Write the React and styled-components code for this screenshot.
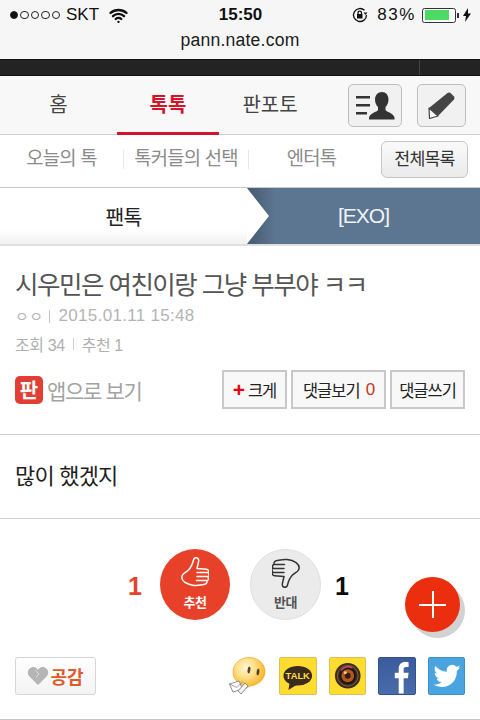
import React from 'react'
import styled, { createGlobalStyle } from 'styled-components'
import { Wifi } from 'lucide-react'

const KR = `"Liberation Sans", "Noto Sans CJK KR", sans-serif`

const GlobalStyle = createGlobalStyle`
  html, body {
    margin: 0;
    padding: 0;
    background: #fff;
    font-family: ${KR};
  }
  * { box-sizing: border-box; }
`

const Page = styled.div`
  position: relative;
  width: 480px;
  height: 720px;
  overflow: hidden;
  background: #fff;
`

const Chrome = styled.header`
  height: 59px;
  background: #f6f6f6;
  color: #111;
`

const StatusBar = styled.div`
  display: grid;
  grid-template-columns: 1fr auto 1fr;
  align-items: center;
  height: 30px;
  padding: 0 9px 0 10px;
  font-size: 17px;
`

const StatusLeft = styled.div`
  display: flex;
  align-items: center;
  gap: 2px;
`

const Dot = styled.span`
  width: 8.4px;
  height: 8.4px;
  border-radius: 50%;
  border: 1px solid #222;
  background: ${(p) => (p.$on ? '#111' : 'transparent')};
`

const Carrier = styled.span`
  margin: 0 8px 0 4px;
`

const Clock = styled.span`
  font-weight: 700;
`

const StatusRight = styled.div`
  display: flex;
  align-items: center;
  justify-content: flex-end;
`

const Percent = styled.span`
  margin: 0 6px 0 8px;
  letter-spacing: 1.6px;
`

const Battery = styled.span`
  position: relative;
  display: block;
  width: 34px;
  height: 15px;
  margin-right: 7px;
  padding: 1.5px;
  border: 1px solid #333;
  border-radius: 2.5px;
  background: #fff;

  &::before {
    content: '';
    display: block;
    width: 24px;
    height: 100%;
    background: #4cd964;
  }

  &::after {
    content: '';
    position: absolute;
    right: -4px;
    top: 4px;
    width: 2px;
    height: 5px;
    background: #333;
  }
`

const Url = styled.div`
  text-align: center;
  font-size: 17.6px;
  line-height: 20px;
  letter-spacing: 0.2px;
  color: #1c1c1c;
`

const BlackBar = styled.div`
  height: 17px;
  background: linear-gradient(90deg, #232323 419px, #444 419px, #444 420px, #232323 420px);
  border-top: 1px solid #111;
  border-bottom: 1px solid #111;
`

const Nav = styled.nav`
  display: flex;
  align-items: stretch;
  height: 59px;
  padding-right: 14px;
  background: #f8f8f8;
  border-bottom: 1px solid #cfcfcf;
`

const NavTab = styled.div`
  width: ${(p) => p.$w}px;
  display: flex;
  align-items: center;
  justify-content: center;
  margin-bottom: -1px;
  padding-bottom: 1px;
  font-size: 20px;
  font-weight: ${(p) => (p.$active ? 700 : 400)};
  color: ${(p) => (p.$active ? '#d2152b' : '#444')};
  border-bottom: 3px solid ${(p) => (p.$active ? '#d2152b' : 'transparent')};
`

const NavActions = styled.div`
  display: flex;
  gap: 15px;
  align-items: flex-start;
  margin-left: auto;
  padding-top: 8px;
`

const IconButton = styled.button`
  display: flex;
  align-items: center;
  justify-content: center;
  width: ${(p) => p.$w}px;
  height: 43px;
  padding: 0;
  background: #f1f1f1;
  border: 1px solid #bdbdbd;
  border-radius: 5px;
`

const SubNav = styled.div`
  display: flex;
  align-items: center;
  height: 53px;
  padding: 0 12px 4px 0;
  background: #fff;
  border-bottom: 1px solid #c9c9c9;
`

const SubTab = styled.div`
  width: ${(p) => p.$w}px;
  padding-bottom: 1px;
  text-align: center;
  font-size: 18.8px;
  line-height: 18px;
  letter-spacing: -0.8px;
  color: #8b8b8b;
  border-right: ${(p) => (p.$sep ? '1px solid #e6e6e6' : '0')};
`

const AllButton = styled.button`
  width: 87px;
  height: 37px;
  margin-left: auto;
  padding: 0 0 3px;
  font-family: inherit;
  font-size: 17.3px;
  letter-spacing: -0.8px;
  color: #333;
  background: linear-gradient(#fafafa, #eaeaea);
  border: 1px solid #c6c6c6;
  border-radius: 6px;
`

const Crumbs = styled.div`
  display: grid;
  grid-template-columns: 247px 1fr;
  height: 58px;
  border-bottom: 2px solid #e0e0e0;
`

const CrumbHome = styled.div`
  display: flex;
  align-items: center;
  justify-content: center;
  font-size: 20.5px;
  letter-spacing: -0.8px;
  color: #222;
  background: linear-gradient(#fff 75%, #f1f1f1);
`

const CrumbCurrent = styled.div`
  position: relative;
  display: flex;
  align-items: center;
  justify-content: center;
  font-size: 21px;
  letter-spacing: -1px;
  color: #f1f4f7;
  background: linear-gradient(90deg, #45596f, #5c7590 28px);

  &::before {
    content: '';
    position: absolute;
    left: 0;
    top: 0;
    bottom: 0;
    width: 22px;
    background: #fff;
    clip-path: polygon(0 0, 100% 50%, 0 100%);
  }
`

const Article = styled.section`
  padding: 0 15px;
  height: 189px;
  border-bottom: 1px solid #cfcfcf;
`

const Title = styled.h1`
  margin: 0;
  padding-top: 21px;
  font-size: 25.5px;
  line-height: 37px;
  font-weight: 400;
  letter-spacing: -1.5px;
  color: #555;
`

const Meta = styled.div`
  display: flex;
  align-items: center;
  height: 26px;
  margin-top: -1px;
  font-size: 17px;
  letter-spacing: 0.3px;
  color: #b4b4b4;
`

const MetaAuthor = styled.span`
  margin-right: 9px;
  padding-right: 5px;
  font-size: 15px;
  line-height: 13px;
  letter-spacing: 0.5px;
  border-right: 1px solid #c4c4c4;
`

const Stats = styled.div`
  display: flex;
  align-items: center;
  height: 28px;
  margin-top: 1px;
  font-size: 16px;
  letter-spacing: -0.4px;
  color: #b0b0b0;
`

const StatSep = styled.span`
  width: 1px;
  height: 12px;
  margin: 0 8px;
  background: #d0d0d0;
`

const ActionRow = styled.div`
  display: flex;
  align-items: center;
  justify-content: space-between;
  margin-top: 12px;
`

const AppLink = styled.div`
  display: flex;
  align-items: center;
  gap: 4px;
  font-size: 21px;
  letter-spacing: -1.3px;
  color: #a3a3a3;
`

const AppBadge = styled.span`
  display: flex;
  align-items: center;
  justify-content: center;
  width: 28px;
  height: 28px;
  border-radius: 5px;
  font-size: 20px;
  font-weight: 700;
  letter-spacing: 0;
  color: #fff;
  background: #e23f34;
`

const ActionButtons = styled.div`
  display: flex;
  gap: 4px;
`

const ActionButton = styled.button`
  display: flex;
  align-items: center;
  justify-content: center;
  gap: 4px;
  width: ${(p) => p.$w}px;
  height: 39px;
  padding: 0;
  font-family: inherit;
  font-size: 16.5px;
  letter-spacing: -1px;
  color: #222;
  background: #f8f8f8;
  border: 2px solid #c8c8c8;
`

const Plus = styled.span`
  font-size: 21px;
  line-height: 1;
  font-weight: 700;
  color: #e60012;
`

const Zero = styled.span`
  margin-left: 2px;
  font-size: 17px;
  color: #c8341c;
`

const Body = styled.p`
  display: flex;
  align-items: center;
  height: 84px;
  margin: 0;
  padding: 0 15px 5px;
  font-size: 22px;
  letter-spacing: -0.8px;
  color: #1e1e1e;
  border-bottom: 1px solid #cfcfcf;
`

const Votes = styled.div`
  display: flex;
  align-items: center;
  justify-content: center;
  height: 138px;
  padding: 0 3px 8px 0;
`

const VoteCount = styled.span`
  width: 30px;
  margin-top: 4px;
  font-size: 25px;
  font-weight: 700;
  text-align: center;
  color: ${(p) => (p.$up ? '#e2452d' : '#0c0c0c')};
`

const VoteCircle = styled.div`
  display: flex;
  flex-direction: column;
  align-items: center;
  gap: 7px;
  width: ${(p) => (p.$up ? '70px' : '71px')};
  height: 71px;
  margin: 0 ${(p) => (p.$up ? '10px' : '6px')} 0 10px;
  padding-top: ${(p) => (p.$up ? '8px' : '7px')};
  border-radius: 50%;
  font-size: 13px;
  line-height: 15px;
  font-weight: 700;
  letter-spacing: -0.5px;
  color: ${(p) => (p.$up ? '#fff' : '#555')};
  background: ${(p) => (p.$up ? '#e8412a' : '#ebebeb')};
  border: ${(p) => (p.$up ? '0' : '1px solid #e0e0e0')};
`

const Fab = styled.div`
  position: absolute;
  left: 405px;
  top: 577px;
  width: 55px;
  height: 55px;
  border-radius: 50%;
  background: #ea2e0e;
  box-shadow: 5px 6px 0 #d2d2d2;

  &::before,
  &::after {
    content: '';
    position: absolute;
    background: #fff;
  }

  &::before {
    left: 14px;
    top: 26.5px;
    width: 27px;
    height: 2px;
  }

  &::after {
    left: 26.5px;
    top: 14px;
    width: 2px;
    height: 27px;
  }
`

const ShareRow = styled.div`
  display: flex;
  align-items: flex-start;
  height: 63px;
  padding: 0 15px;
  border-bottom: 1px solid #c4c4c4;
`

const LikeButton = styled.button`
  display: flex;
  align-items: center;
  justify-content: center;
  gap: 1px;
  width: 81px;
  height: 38px;
  padding: 0;
  font-family: inherit;
  font-size: 18px;
  font-weight: 700;
  color: #dc5b2d;
  background: linear-gradient(#fff, #f3f3f3);
  border: 1px solid #d6d6d6;
  border-radius: 3px;
`

const ShareIcons = styled.div`
  display: flex;
  align-items: flex-start;
  gap: 12px;
  margin-left: auto;
`

const ShareTile = styled.div`
  display: flex;
  width: 37.5px;
  height: 37.5px;
  border-radius: 2px;
  overflow: hidden;
  border: 1px solid ${(p) => p.$edge};
  background: ${(p) => p.$bg};
`

const TileSvg = styled.svg`
  display: block;
  width: 100%;
  height: 100%;
`

const EmojiSvg = styled.svg`
  display: block;
  width: 38px;
  height: 38px;
`

const ListPersonIcon = () => (
  <svg width="40" height="30" viewBox="0 0 40 30">
    <g fill="#333">
      <rect x="1" y="5" width="14" height="2.5" />
      <rect x="1" y="13" width="14" height="2.5" />
      <rect x="1" y="21" width="11" height="2.5" />
      <path d="M27 1c4 0 6.500 3 6.500 7.500 0 3.500-1.500 6-3 7.500v3c1 2 8 3 9 7.500v2H14v-2c1-4.500 8-5.500 9-7.500v-3c-1.500-1.500-3-4-3-7.500C20 4 23 1 27 1z" />
    </g>
  </svg>
)

const PencilIcon = () => (
  <svg width="27" height="27" viewBox="0 0 27 27">
    <path d="M19.500 1Q21.500 0 23 1.500L26 4.500Q27 6 26 7.500L10 24 1 16z" fill="#444" />
    <path d="M1 16 10 24 1.500 26.500z" fill="#f6f6f6" stroke="#444" strokeWidth="1.200" strokeLinejoin="round" />
  </svg>
)

// same outline for both votes, the down one is just turned over
const ThumbPaths = () => (
  <>
    <path d="M15 .7c2 0 3 1.500 2.600 3.800L16 11.500l9.500.8c2 .2 2.800 2.200 1.800 3.700 1 1.300.9 3-.2 4 .8 1.500.3 3.200-1.200 3.800.4 2-.8 3.500-3 3.800-4 .6-7 1.200-10 .8-3.500-.4-6-1-9-3C.8 23 .2 20.500 1.500 18c1-2 4-3 6-5 2.500-2.500 4-6 5-10 .3-1.300 1.200-2.300 2.500-2.300z" />
    <path d="M16 15.500h11M16 19.500h11M15.500 23.500h10" />
  </>
)

const ThumbUp = () => (
  <svg width="28" height="31" viewBox="0 0 28 31" fill="none" stroke="#fff" strokeWidth="1.500" strokeLinejoin="round" strokeLinecap="round">
    <ThumbPaths />
  </svg>
)

const ThumbDown = () => (
  <svg width="28" height="31" viewBox="0 0 28 31" fill="none" stroke="#333" strokeWidth="1.500" strokeLinejoin="round" strokeLinecap="round">
    <g transform="rotate(180 14 15.5)">
      <ThumbPaths />
    </g>
  </svg>
)

const HeartIcon = () => (
  <svg width="22" height="20" viewBox="0 0 22 20">
    <path d="M11 19 2 10C-1 6 2 1 6.500 1 8.500 1 10 2 11 4c1-2 2.500-3 4.500-3C20 1 23 6 20 10z" fill="#b5b5b5" />
    <path d="M8 4 12 8 9 11" fill="none" stroke="#dcdcdc" strokeWidth="1" />
  </svg>
)

const BoltIcon = () => (
  <svg width="8" height="14" viewBox="0 0 8 14">
    <path d="M5 0 0 8h3l-1 6 6-8.500H5z" fill="#111" />
  </svg>
)

const RotationLockIcon = () => (
  <svg width="18" height="18" viewBox="0 0 18 18" fill="none" stroke="#111" strokeWidth="1.300">
    <path d="M15.500 9a6.500 6.500 0 1 1-2-4.700" />
    <path d="M12.500 6.500h4l-2 2.500z" fill="#111" stroke="none" />
    <rect x="6" y="8" width="5.500" height="4.500" fill="#111" stroke="none" />
    <path d="M7 8V6.800a1.700 1.700 0 0 1 3.500 0V8" />
  </svg>
)

const EmojiIcon = () => (
  <EmojiSvg viewBox="0 0 38 38">
    <defs>
      <radialGradient id="face" cx="0.4" cy="0.32" r="0.72">
        <stop offset="0" stopColor="#fff6d6" />
        <stop offset="0.4" stopColor="#ffe08a" />
        <stop offset="0.8" stopColor="#f8ba32" />
        <stop offset="1" stopColor="#e89a10" />
      </radialGradient>
    </defs>
    <path d="M20 0.500c9 0 16 6 16 14 0 8.500-8 14-15 14.500l-7 4c.5-2 .3-3.500-1-5C7 25 4 20 4 15 4 7 11 .5 20 .5z" fill="url(#face)" stroke="#eca822" strokeWidth="0.700" />
    <ellipse cx="20" cy="13" rx="1.400" ry="3.400" fill="#5a4526" transform="rotate(8 20 13)" />
    <ellipse cx="29" cy="15" rx="1.400" ry="3.400" fill="#5a4526" transform="rotate(8 29 15)" />
    <path d="M0.500 27 10 24l3.500 8-9.500 3z" fill="#fff" stroke="#8c8c8c" strokeWidth="1" />
    <path d="M0.500 27 8 30.500l5.500-6" fill="none" stroke="#8c8c8c" strokeWidth="0.800" />
    <path d="M9 34l7-8 3 3-7 8z" fill="#f4f4f4" stroke="#8c8c8c" strokeWidth="1" />
  </EmojiSvg>
)

const TalkIcon = () => (
  <TileSvg viewBox="0 0 36 36">
    <ellipse cx="18" cy="18" rx="14.500" ry="10" fill="#3a2a20" />
    <path d="M10 24l-1.500 8.500L17 27z" fill="#3a2a20" />
    <text x="18" y="21.500" textAnchor="middle" fontSize="9.500" fontWeight="700" fill="#ffdf3a" fontFamily="Liberation Sans">TALK</text>
  </TileSvg>
)

const LensIcon = () => (
  <TileSvg viewBox="0 0 36 36">
    <circle cx="18" cy="18" r="13" fill="#3c2a20" />
    <circle cx="18" cy="18" r="10.500" fill="none" stroke="#7c6238" strokeWidth="1" />
    <circle cx="18" cy="18" r="8.500" fill="#1c1512" />
    <circle cx="18" cy="18" r="6.500" fill="#b0581f" />
    <circle cx="18" cy="18" r="3" fill="#3a1a10" />
    <circle cx="15.500" cy="15" r="1.500" fill="#ffcf8a" />
    <path d="M11.500 12.500a8.500 8.500 0 0 1 11-2.500" fill="none" stroke="#d4477c" strokeWidth="1.500" />
  </TileSvg>
)

const FacebookIcon = () => (
  <TileSvg viewBox="0 0 36 36">
    <path d="M20 36V20.500h-4V15h4v-4c0-4.500 2.500-7 6.500-7 1.500 0 3 .1 3.500.2v5h-2.500c-2 0-2.500 1-2.500 2.500V15h5l-.7 5.500h-4.300V36z" fill="#fff" />
  </TileSvg>
)

const TwitterIcon = () => (
  <TileSvg viewBox="0 0 36 36">
    <path d="M32 9.500c-1 .5-2 .8-3.200 1 1.200-.7 2-1.800 2.500-3-1.100.6-2.300 1.100-3.600 1.400a5.600 5.600 0 0 0-9.600 5.100C13.400 13.800 9.300 11.600 6.500 8.200c-1.500 2.600-.7 5.900 1.700 7.500-.9 0-1.800-.3-2.500-.7 0 2.700 1.900 5 4.500 5.600-.8.200-1.700.2-2.500.1.700 2.200 2.800 3.800 5.200 3.900-2.400 1.900-5.400 2.700-8.400 2.300 9.500 6 23.800 1 23.800-13.800 1.100-.8 2-1.800 2.700-2.900z" fill="#fff" />
  </TileSvg>
)

export default function App() {
  return (
    <Page>
      <GlobalStyle />
      <Chrome>
        <StatusBar>
          <StatusLeft>
            <Dot $on />
            <Dot />
            <Dot />
            <Dot />
            <Dot />
            <Carrier>SKT</Carrier>
            <Wifi size={19} strokeWidth={3} color="#111" />
          </StatusLeft>
          <Clock>15:50</Clock>
          <StatusRight>
            <RotationLockIcon />
            <Percent>83%</Percent>
            <Battery />
            <BoltIcon />
          </StatusRight>
        </StatusBar>
        <Url>pann.nate.com</Url>
      </Chrome>
      <BlackBar />
      <Nav>
        <NavTab $w={117}>홈</NavTab>
        <NavTab $w={102} $active>톡톡</NavTab>
        <NavTab $w={102}>판포토</NavTab>
        <NavActions>
          <IconButton $w={54}><ListPersonIcon /></IconButton>
          <IconButton $w={49}><PencilIcon /></IconButton>
        </NavActions>
      </Nav>
      <SubNav>
        <SubTab $w={124} $sep>오늘의 톡</SubTab>
        <SubTab $w={125} $sep>톡커들의 선택</SubTab>
        <SubTab $w={125}>엔터톡</SubTab>
        <AllButton>전체목록</AllButton>
      </SubNav>
      <Crumbs>
        <CrumbHome>팬톡</CrumbHome>
        <CrumbCurrent>[EXO]</CrumbCurrent>
      </Crumbs>
      <Article>
        <Title>시우민은 여친이랑 그냥 부부야 ㅋㅋ</Title>
        <Meta>
          <MetaAuthor>ㅇㅇ</MetaAuthor>
          2015.01.11 15:48
        </Meta>
        <Stats>
          조회 34
          <StatSep />
          추천 1
        </Stats>
        <ActionRow>
          <AppLink>
            <AppBadge>판</AppBadge>
            앱으로 보기
          </AppLink>
          <ActionButtons>
            <ActionButton $w={65}><Plus>+</Plus>크게</ActionButton>
            <ActionButton $w={95}>댓글보기<Zero>0</Zero></ActionButton>
            <ActionButton $w={75}>댓글쓰기</ActionButton>
          </ActionButtons>
        </ActionRow>
      </Article>
      <Body>많이 했겠지</Body>
      <Votes>
        <VoteCount $up>1</VoteCount>
        <VoteCircle $up>
          <ThumbUp />
          추천
        </VoteCircle>
        <VoteCircle>
          <ThumbDown />
          반대
        </VoteCircle>
        <VoteCount>1</VoteCount>
      </Votes>
      <Fab />
      <ShareRow>
        <LikeButton>
          <HeartIcon />
          공감
        </LikeButton>
        <ShareIcons>
          <EmojiIcon />
          <ShareTile $bg="#ffdd2e" $edge="#dcc060"><TalkIcon /></ShareTile>
          <ShareTile $bg="#ffdd2e" $edge="#dcc060"><LensIcon /></ShareTile>
          <ShareTile $bg="linear-gradient(#3a5a9c, #4a6cab)" $edge="#34528c"><FacebookIcon /></ShareTile>
          <ShareTile $bg="#4aa4e0" $edge="#3d8fc8"><TwitterIcon /></ShareTile>
        </ShareIcons>
      </ShareRow>
    </Page>
  )
}
